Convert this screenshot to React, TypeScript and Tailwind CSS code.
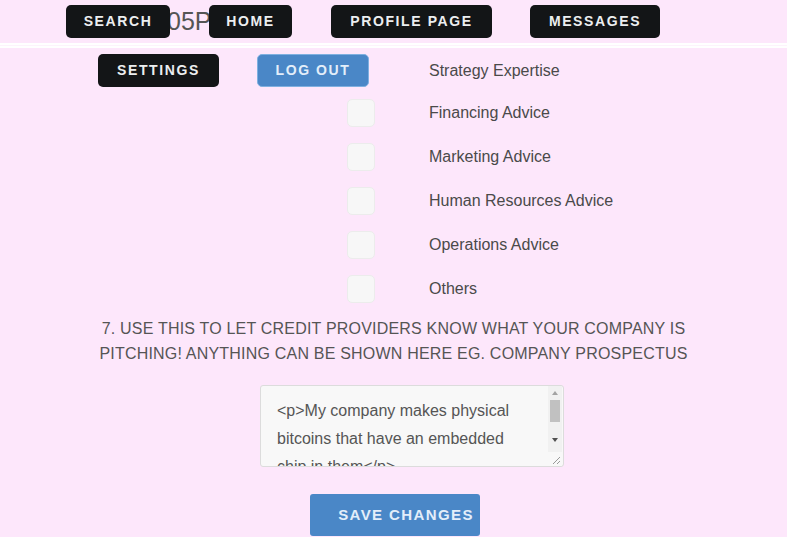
import React from "react";

const navBtn =
  "relative z-10 h-[33px] rounded-[5px] bg-[#131517] text-[#eceef0] text-[14px] font-bold tracking-[1.6px] flex items-center justify-center whitespace-nowrap";

const items = [
  "Financing Advice",
  "Marketing Advice",
  "Human Resources Advice",
  "Operations Advice",
  "Others",
];

export default function App() {
  return (
    <div
      className="min-h-screen w-full bg-[#fde7fb] text-[#4a4a4a]"
      style={{ fontFamily: '"Liberation Sans", Arial, sans-serif' }}
    >
      {/* top nav row */}
      <div className="relative h-[43px] pt-[5px]">
        <span className="absolute left-[167px] top-[5px] z-0 text-[25px] leading-[33px] text-[#555]">
          05P
        </span>
        <div className="flex">
          <div className="ml-[66px] w-[104px]">
            <button className={navBtn + " w-full"}>SEARCH</button>
          </div>
          <button className={navBtn + " ml-[39px] w-[83px]"}>HOME</button>
          <button className={navBtn + " ml-[39px] w-[161px]"}>PROFILE PAGE</button>
          <button className={navBtn + " ml-[38px] w-[130px]"}>MESSAGES</button>
        </div>
      </div>
      <div className="h-[5px] border-y-2 border-white bg-[#fdf3fc]" />

      {/* second row with settings / logout and first option */}
      <div className="flex h-[43px] items-center pt-[2px]">
        <button className={navBtn + " ml-[98px] w-[121px]"}>SETTINGS</button>
        <button className="ml-[38px] flex h-[33px] w-[112px] items-center justify-center rounded-[5px] border border-[#7fb0e0] bg-[#4a87c7] text-[14px] font-bold tracking-[1.6px] text-[#e3eefa]">
          LOG OUT
        </button>
        <span className="ml-[60px] text-[16px] text-[#4a4a4a]">Strategy Expertise</span>
      </div>

      {/* options list */}
      <div className="flex flex-col">
        {items.map((label) => (
          <div key={label} className="flex h-[44px] items-center">
            <div className="ml-[347px] h-[28px] w-[28px] rounded-[5px] border border-[#ececec] bg-[#f7f7f7]" />
            <span className="ml-[54px] text-[16px] text-[#4a4a4a]">{label}</span>
          </div>
        ))}
      </div>

      {/* question */}
      <p className="mt-[5px] px-[90px] text-center text-[16px] uppercase leading-[25px] text-[#555] tracking-[0.2px]">
        7. Use this to let credit providers know what your company is pitching! Anything can be shown here eg. company prospectus
      </p>

      {/* textarea */}
      <div className="mt-[19px] flex justify-center">
        <div className="relative ml-[37px] h-[82px] w-[304px] overflow-hidden rounded-[3px] border border-[#dcdcdc] bg-[#f8f8f8]">
          <div className="pl-[16px] pr-[28px] pt-[11px] text-[16px] leading-[28px] text-[#555]">
            &lt;p&gt;My company makes physical bitcoins that have an embedded chip in them&lt;/p&gt;
          </div>
          {/* fake scrollbar */}
          <div className="absolute right-[1px] top-0 flex h-[67px] w-[14px] flex-col items-center bg-[#f1f1f1]">
            <svg width="8" height="6" viewBox="0 0 8 6" className="mt-[4px]">
              <path d="M4 1 L7 5 L1 5 Z" fill="#a3a3a3" />
            </svg>
            <div className="mt-[4px] h-[22px] w-[10px] bg-[#c1c1c1]" />
            <svg width="8" height="6" viewBox="0 0 8 6" className="mt-[15px]">
              <path d="M1 1 L7 1 L4 5 Z" fill="#505050" />
            </svg>
          </div>
          <div className="absolute bottom-0 right-[1px] h-[14px] w-[14px] bg-[#f8f8f8]">
            <svg width="14" height="14" viewBox="0 0 14 14">
              <path d="M12 5 L5 12 M12 9 L9 12" stroke="#999" strokeWidth="1" />
            </svg>
          </div>
        </div>
      </div>

      {/* save */}
      <div className="mt-[27px] flex justify-center">
        <button className="ml-[3px] flex h-[42px] w-[170px] items-center justify-center whitespace-nowrap rounded-[3px] bg-[#4a87c7] pl-[22px] text-[15px] font-bold tracking-[1.4px] text-[#e3eefa]">
          SAVE CHANGES
        </button>
      </div>
    </div>
  );
}
